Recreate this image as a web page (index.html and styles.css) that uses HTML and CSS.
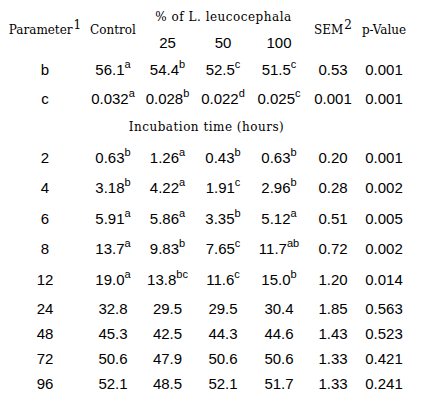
FILE: index.html
```html
<!DOCTYPE html>
<html>
<head>
<meta charset="utf-8">
<link rel="stylesheet" href="styles.css">
</head>
<body>
<table class="tbl">
  <colgroup>
    <col class="w1"><col class="w2"><col class="w3"><col class="w4"><col class="w5"><col class="w6"><col class="w7">
  </colgroup>
  <thead>
    <tr class="r-h1">
      <th rowspan="2" class="hd">Parameter<sup class="hs">1</sup></th>
      <th rowspan="2" class="hd">Control</th>
      <th colspan="3" class="hd wide">% of L. leucocephala</th>
      <th rowspan="2" class="hd">SEM<sup class="hs">2</sup></th>
      <th rowspan="2" class="hd pv">p-Value</th>
    </tr>
    <tr class="r-h2">
      <th class="num">25</th><th class="num">50</th><th class="num">100</th>
    </tr>
  </thead>
  <tbody>
    <tr class="r29">
      <td>b</td><td>56.1<sup>a</sup></td><td>54.4<sup>b</sup></td><td>52.5<sup>c</sup></td><td>51.5<sup>c</sup></td><td>0.53</td><td>0.001</td>
    </tr>
    <tr class="r29">
      <td>c</td><td>0.032<sup>a</sup></td><td>0.028<sup>b</sup></td><td>0.022<sup>d</sup></td><td>0.025<sup>c</sup></td><td>0.001</td><td>0.001</td>
    </tr>
    <tr class="r29">
      <td colspan="7" class="hd wide sect">Incubation time (hours)</td>
    </tr>
    <tr class="r30">
      <td>2</td><td>0.63<sup>b</sup></td><td>1.26<sup>a</sup></td><td>0.43<sup>b</sup></td><td>0.63<sup>b</sup></td><td>0.20</td><td>0.001</td>
    </tr>
    <tr class="r31">
      <td>4</td><td>3.18<sup>b</sup></td><td>4.22<sup>a</sup></td><td>1.91<sup>c</sup></td><td>2.96<sup>b</sup></td><td>0.28</td><td>0.002</td>
    </tr>
    <tr class="r30">
      <td>6</td><td>5.91<sup>a</sup></td><td>5.86<sup>a</sup></td><td>3.35<sup>b</sup></td><td>5.12<sup>a</sup></td><td>0.51</td><td>0.005</td>
    </tr>
    <tr class="r31">
      <td>8</td><td>13.7<sup>a</sup></td><td>9.83<sup>b</sup></td><td>7.65<sup>c</sup></td><td>11.7<sup>ab</sup></td><td>0.72</td><td>0.002</td>
    </tr>
    <tr class="r31">
      <td>12</td><td>19.0<sup>a</sup></td><td>13.8<sup>bc</sup></td><td>11.6<sup>c</sup></td><td>15.0<sup>b</sup></td><td>1.20</td><td>0.014</td>
    </tr>
    <tr class="r26">
      <td>24</td><td>32.8</td><td>29.5</td><td>29.5</td><td>30.4</td><td>1.85</td><td>0.563</td>
    </tr>
    <tr class="r25">
      <td>48</td><td>45.3</td><td>42.5</td><td>44.3</td><td>44.6</td><td>1.43</td><td>0.523</td>
    </tr>
    <tr class="r25">
      <td>72</td><td>50.6</td><td>47.9</td><td>50.6</td><td>50.6</td><td>1.33</td><td>0.421</td>
    </tr>
    <tr class="r25">
      <td>96</td><td>52.1</td><td>48.5</td><td>52.1</td><td>51.7</td><td>1.33</td><td>0.241</td>
    </tr>
  </tbody>
</table>
</body>
</html>
```
FILE: styles.css
```css
html, body {
  margin: 0;
  padding: 0;
  background: #ffffff;
  color: #000000;
}

.tbl {
  margin: 5px 0 0 4px;
  width: 405px;
  table-layout: fixed;
  border-collapse: collapse;
  border-spacing: 0;
  font-family: "Liberation Sans", Arial, sans-serif;
  font-size: 15px;
  line-height: 17px;
}

.w1 { width: 82px; }
.w2 { width: 54px; }
.w3 { width: 55px; }
.w4 { width: 56px; }
.w5 { width: 56px; }
.w6 { width: 52px; }
.w7 { width: 50px; }

.tbl th,
.tbl td {
  padding: 0;
  text-align: center;
  vertical-align: middle;
  white-space: nowrap;
  font-weight: normal;
}

.hd {
  font-family: "DejaVu Serif", serif;
  font-size: 12px;
}

.wide {
  letter-spacing: 0.5px;
}

.sect {
  padding-left: 10px;
}

.pv {
  padding-left: 8px;
}

.num {
  font-family: "Liberation Sans", Arial, sans-serif;
  font-size: 15px;
}

sup {
  font-family: "Liberation Sans", Arial, sans-serif;
  font-size: 11px;
  line-height: 0;
  vertical-align: 7px;
}

sup.hs {
  font-family: "DejaVu Serif", serif;
  font-size: 12px;
  vertical-align: 5px;
  margin-left: 1px;
}

.r-h1 { height: 24px; }
.r-h2 { height: 26px; }
.r25 { height: 25px; }
.r26 { height: 26px; }
.r29 { height: 29px; }
.r30 { height: 30px; }
.r31 { height: 31px; }
```
